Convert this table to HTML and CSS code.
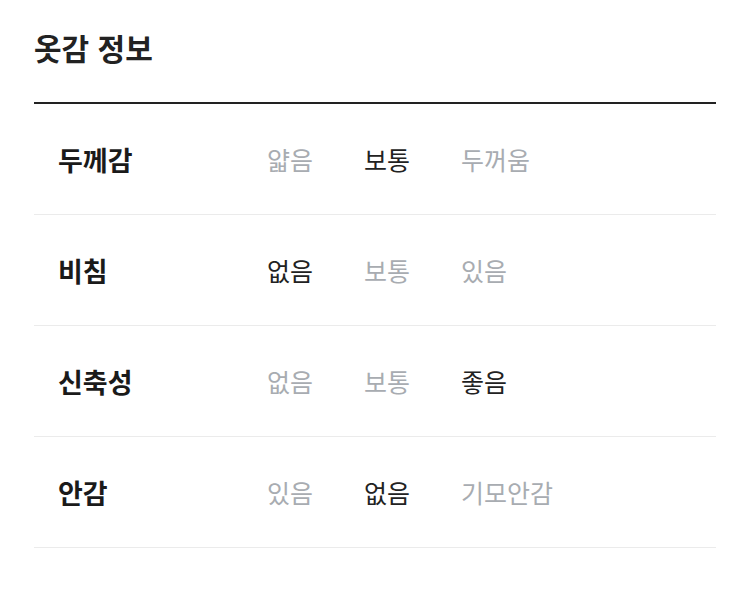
FILE: index.html
```html
<!DOCTYPE html>
<html lang="ko">
<head>
<meta charset="utf-8">
<link rel="stylesheet" href="styles.css">
</head>
<body>
<section class="fabric">
  <h2 class="title">옷감 정보</h2>
  <div class="table">
    <div class="row">
      <div class="label">두께감</div>
      <div class="opt">얇음</div>
      <div class="opt on">보통</div>
      <div class="opt">두꺼움</div>
    </div>
    <div class="row">
      <div class="label">비침</div>
      <div class="opt on">없음</div>
      <div class="opt">보통</div>
      <div class="opt">있음</div>
    </div>
    <div class="row">
      <div class="label">신축성</div>
      <div class="opt">없음</div>
      <div class="opt">보통</div>
      <div class="opt on">좋음</div>
    </div>
    <div class="row">
      <div class="label">안감</div>
      <div class="opt">있음</div>
      <div class="opt on">없음</div>
      <div class="opt">기모안감</div>
    </div>
  </div>
</section>
</body>
</html>
```
FILE: styles.css
```css
html, body {
  margin: 0;
  padding: 0;
  background: #fff;
}
body {
  font-family: "Noto Sans CJK KR", "Noto Sans", sans-serif;
  color: #222;
}
.fabric {
  padding: 0 34px;
}
.title {
  margin: 0;
  padding-top: 26px;
  height: 104px;
  box-sizing: border-box;
  font-size: 30px;
  line-height: 42px;
  font-weight: 700;
  border-bottom: 2px solid #222;
}
.row {
  display: grid;
  grid-template-columns: 209px 97px 97px 1fr;
  align-items: center;
  height: 110px;
  padding-left: 24px;
  border-bottom: 1px solid #ebebeb;
}
.label {
  font-size: 27px;
  font-weight: 700;
  color: #1a1a1a;
}
.opt {
  font-size: 25px;
  color: #a8acb1;
  white-space: nowrap;
}
.opt.on {
  color: #222;
}
```
